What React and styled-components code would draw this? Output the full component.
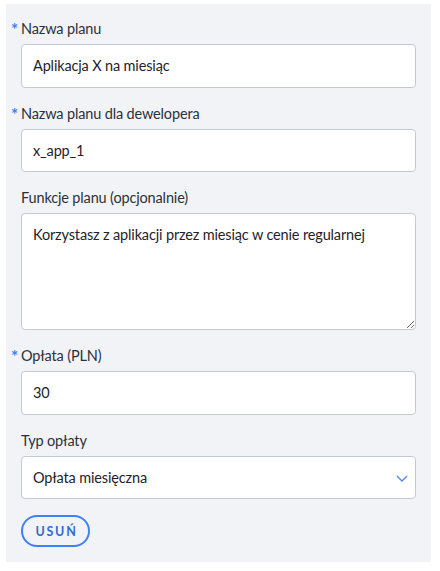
import React, { useState } from 'react';
import styled, { createGlobalStyle } from 'styled-components';

const GlobalStyle = createGlobalStyle`
  body {
    margin: 0;
    background: #ffffff;
    font-family: Lato, "Noto Sans", sans-serif;
  }
`;

const Panel = styled.form`
  width: 425px;
  box-sizing: border-box;
  margin: 4px 0 0 6px;
  padding: 15px 15px 15px;
  background: #f2f3f7;
  display: flex;
  flex-direction: column;
  gap: 16px;
`;

const Field = styled.div`
  display: flex;
  flex-direction: column;
`;

const Label = styled.label`
  position: relative;
  font-size: 14.5px;
  letter-spacing: -0.15px;
  line-height: 20px;
  color: #2c3139;
  margin-bottom: 5px;

  ${p => p.$required && `
    &::before {
      content: '*';
      position: absolute;
      left: -10px;
      top: 1px;
      color: #3b82f6;
      font-size: 17px;
      font-weight: 700;
    }
  `}
`;

const controlBase = `
  box-sizing: border-box;
  width: 100%;
  border: 1px solid #c4c9d8;
  border-radius: 4px;
  background: #ffffff;
  font-family: Lato, "Noto Sans", sans-serif;
  font-size: 14.5px;
  letter-spacing: -0.15px;
  color: #1f2328;
  padding: 0 11px;
  outline: none;
`;

const Input = styled.input`
  ${controlBase}
  height: 43.5px;
`;

const TextArea = styled.textarea`
  ${controlBase}
  height: 117px;
  padding-top: 11px;
  line-height: 20px;
  resize: vertical;
  display: block;
`;

const SelectWrap = styled.div`
  position: relative;
`;

const Select = styled.select`
  ${controlBase}
  height: 43.5px;
  appearance: none;
  -webkit-appearance: none;
`;

const Chevron = styled.svg`
  position: absolute;
  right: 8px;
  top: 19px;
  pointer-events: none;
`;

const RemoveButton = styled.button`
  align-self: flex-start;
  height: 32px;
  width: 69px;
  border: 2px solid #3b82f6;
  border-radius: 16px;
  background: transparent;
  color: #2f6cd3;
  font-family: Lato, "Noto Sans", sans-serif;
  font-size: 12.5px;
  font-weight: 700;
  letter-spacing: 1.8px;
  padding: 0 0 0 2px;
  cursor: pointer;
`;

export default function App() {
  const [name, setName] = useState('Aplikacja X na miesiąc');
  const [devName, setDevName] = useState('x_app_1');
  const [features, setFeatures] = useState('Korzystasz z aplikacji przez miesiąc w cenie regularnej');
  const [price, setPrice] = useState('30');
  const [type, setType] = useState('monthly');

  return (
    <>
      <GlobalStyle />
      <Panel onSubmit={e => e.preventDefault()}>
        <Field>
          <Label $required>Nazwa planu</Label>
          <Input value={name} onChange={e => setName(e.target.value)} />
        </Field>
        <Field>
          <Label $required>Nazwa planu dla dewelopera</Label>
          <Input value={devName} onChange={e => setDevName(e.target.value)} />
        </Field>
        <Field>
          <Label>Funkcje planu (opcjonalnie)</Label>
          <TextArea value={features} onChange={e => setFeatures(e.target.value)} />
        </Field>
        <Field>
          <Label $required>Opłata (PLN)</Label>
          <Input value={price} onChange={e => setPrice(e.target.value)} />
        </Field>
        <Field>
          <Label>Typ opłaty</Label>
          <SelectWrap>
            <Select value={type} onChange={e => setType(e.target.value)}>
              <option value="monthly">Opłata miesięczna</option>
              <option value="yearly">Opłata roczna</option>
            </Select>
            <Chevron width="12" height="8" viewBox="0 0 12 8">
              <path d="M1 1 L6 6 L11 1" fill="none" stroke="#4a86e8" strokeWidth="1.3" />
            </Chevron>
          </SelectWrap>
        </Field>
        <RemoveButton type="button">USUŃ</RemoveButton>
      </Panel>
    </>
  );
}
